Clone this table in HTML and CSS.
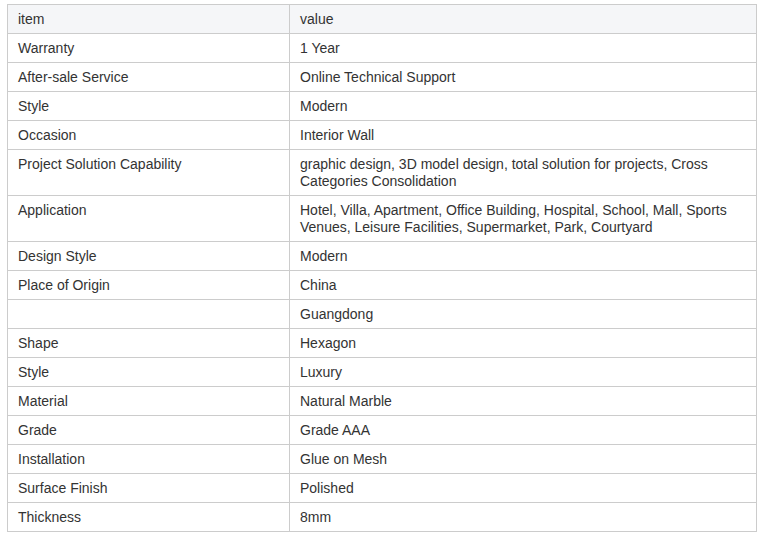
FILE: index.html
```html
<!DOCTYPE html>
<html>
<head>
<meta charset="utf-8">
<link rel="stylesheet" href="styles.css">
</head>
<body>
<table class="spec">
  <thead>
    <tr><th>item</th><th>value</th></tr>
  </thead>
  <tbody>
    <tr><td>Warranty</td><td>1 Year</td></tr>
    <tr><td>After-sale Service</td><td>Online Technical Support</td></tr>
    <tr><td>Style</td><td>Modern</td></tr>
    <tr><td>Occasion</td><td>Interior Wall</td></tr>
    <tr><td>Project Solution Capability</td><td>graphic design, 3D model design, total solution for projects, Cross Categories Consolidation</td></tr>
    <tr><td>Application</td><td>Hotel, Villa, Apartment, Office Building, Hospital, School, Mall, Sports Venues, Leisure Facilities, Supermarket, Park, Courtyard</td></tr>
    <tr><td>Design Style</td><td>Modern</td></tr>
    <tr><td>Place of Origin</td><td>China</td></tr>
    <tr><td></td><td>Guangdong</td></tr>
    <tr><td>Shape</td><td>Hexagon</td></tr>
    <tr><td>Style</td><td>Luxury</td></tr>
    <tr><td>Material</td><td>Natural Marble</td></tr>
    <tr><td>Grade</td><td>Grade AAA</td></tr>
    <tr><td>Installation</td><td>Glue on Mesh</td></tr>
    <tr><td>Surface Finish</td><td>Polished</td></tr>
    <tr><td>Thickness</td><td>8mm</td></tr>
  </tbody>
</table>
</body>
</html>
```
FILE: styles.css
```css
html, body {
  margin: 0;
  background: #fff;
}
body {
  padding: 4px 7px;
  font-family: "Liberation Sans", Arial, sans-serif;
  font-size: 14px;
  color: #333;
}
.spec {
  width: 750px;
  border-collapse: collapse;
  table-layout: fixed;
}
.spec th, .spec td {
  border: 1px solid #ccc;
  padding: 6px 10px 5px;
  line-height: 17px;
  text-align: left;
  vertical-align: top;
  font-weight: normal;
}
.spec th:first-child, .spec td:first-child {
  width: 261px;
}
.spec thead th {
  background: #f5f6f8;
}
```
